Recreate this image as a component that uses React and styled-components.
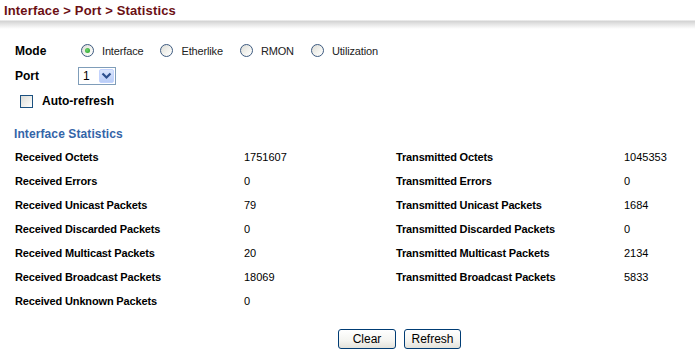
import React, { useState } from 'react';
import styled, { createGlobalStyle } from 'styled-components';

const GlobalStyle = createGlobalStyle`
  body {
    margin: 0;
    background: #ffffff;
    font-family: "Liberation Sans", Arial, sans-serif;
  }
`;

const stats = [
  ['Received Octets', '1751607', 'Transmitted Octets', '1045353'],
  ['Received Errors', '0', 'Transmitted Errors', '0'],
  ['Received Unicast Packets', '79', 'Transmitted Unicast Packets', '1684'],
  ['Received Discarded Packets', '0', 'Transmitted Discarded Packets', '0'],
  ['Received Multicast Packets', '20', 'Transmitted Multicast Packets', '2134'],
  ['Received Broadcast Packets', '18069', 'Transmitted Broadcast Packets', '5833'],
  ['Received Unknown Packets', '0', '', ''],
];

const modes = ['Interface', 'Etherlike', 'RMON', 'Utilization'];

const App = () => {
  const [mode, setMode] = useState('Interface');
  const [autoRefresh, setAutoRefresh] = useState(false);

  return (
    <Page>
      <GlobalStyle />
      <Header>
        <Title>Interface &gt; Port &gt; Statistics</Title>
      </Header>

      <Form>
        <FieldRow>
          <FieldLabel>Mode</FieldLabel>
          <RadioGroup>
            {modes.map((m) => (
              <RadioOption key={m} onClick={() => setMode(m)}>
                <Radio $checked={mode === m} />
                <span>{m}</span>
              </RadioOption>
            ))}
          </RadioGroup>
        </FieldRow>

        <FieldRow $top={6}>
          <FieldLabel>Port</FieldLabel>
          <SelectBox>
            <SelectValue>1</SelectValue>
            <SelectArrow>
              <svg width="11" height="8" viewBox="0 0 11 8">
                <path d="M1.5 1.5 L5.5 5.5 L9.5 1.5" fill="none" stroke="#2c4f8c" strokeWidth="2.2" />
              </svg>
            </SelectArrow>
          </SelectBox>
        </FieldRow>

        <CheckRow onClick={() => setAutoRefresh(!autoRefresh)}>
          <CheckBox $checked={autoRefresh} />
          <CheckLabel>Auto-refresh</CheckLabel>
        </CheckRow>
      </Form>

      <SectionTitle>Interface Statistics</SectionTitle>

      <StatsGrid>
        {stats.map((row, i) => (
          <React.Fragment key={i}>
            <StatLabel>{row[0]}</StatLabel>
            <StatValue>{row[1]}</StatValue>
            <StatLabel>{row[2]}</StatLabel>
            <StatValue>{row[3]}</StatValue>
          </React.Fragment>
        ))}
      </StatsGrid>

      <ButtonBar>
        <Button $width={58}>Clear</Button>
        <Button $width={57}>Refresh</Button>
      </ButtonBar>
    </Page>
  );
};

const Page = styled.div`
  width: 695px;
  height: 361px;
  overflow: hidden;
  font-size: 11px;
  color: #000;
`;

const Header = styled.div`
  height: 30px;
  padding: 3px 0 0 4px;
  box-sizing: border-box;
  background: linear-gradient(
    to bottom,
    #ffffff 0px,
    #ffffff 20px,
    #d2d2d2 21px,
    #e4e4e4 24px,
    #ffffff 29px
  );
`;

const Title = styled.div`
  font-size: 13px;
  font-weight: bold;
  color: #6b0f14;
  letter-spacing: 0.15px;
`;

const Form = styled.div`
  padding: 11px 0 0 15px;
`;

const FieldRow = styled.div`
  display: flex;
  align-items: center;
  height: 19px;
  margin-top: ${(p) => p.$top || 0}px;
`;

const FieldLabel = styled.div`
  width: 63px;
  font-weight: bold;
  font-size: 12px;
`;

const RadioGroup = styled.div`
  display: flex;
  align-items: center;
  gap: 17px;
  padding-left: 3px;
`;

const RadioOption = styled.label`
  display: flex;
  align-items: center;
  gap: 8px;
  cursor: pointer;
  font-size: 11px;
  letter-spacing: -0.15px;
  color: #222;
`;

const Radio = styled.span`
  position: relative;
  width: 11px;
  height: 11px;
  border-radius: 50%;
  border: 1px solid #3d5a80;
  background: linear-gradient(135deg, #dcdcd6 0%, #f4f4f0 60%, #ffffff 100%);

  &::after {
    content: '';
    display: ${(p) => (p.$checked ? 'block' : 'none')};
    position: absolute;
    left: 3px;
    top: 3px;
    width: 5px;
    height: 5px;
    border-radius: 50%;
    background: radial-gradient(circle at 40% 40%, #6fd46f, #1f9c1f);
  }
`;

const SelectBox = styled.div`
  display: flex;
  align-items: center;
  width: 38px;
  height: 18px;
  border: 1px solid #7f9db9;
  box-sizing: border-box;
  background: #fff;
`;

const SelectValue = styled.div`
  flex: 1;
  padding-left: 4px;
  font-size: 12px;
  color: #000;
`;

const SelectArrow = styled.div`
  width: 15px;
  height: 14px;
  margin-right: 1px;
  border-radius: 2px;
  background: linear-gradient(to bottom, #dbe6fc, #b9cdf7);
  border: 1px solid #c3d3fd;
  box-sizing: border-box;
  display: flex;
  align-items: center;
  justify-content: center;
`;

const CheckRow = styled.label`
  display: flex;
  align-items: center;
  gap: 9px;
  margin: 9px 0 0 5px;
  cursor: pointer;
`;

const CheckBox = styled.span`
  width: 13px;
  height: 13px;
  box-sizing: border-box;
  border: 1px solid #1c5180;
  background: ${(p) =>
    p.$checked ? '#fff' : 'linear-gradient(135deg, #dcdcd7 0%, #f5f5f2 70%, #fff 100%)'};
`;

const CheckLabel = styled.span`
  font-size: 12px;
  font-weight: bold;
`;

const SectionTitle = styled.div`
  margin: 19px 0 0 14px;
  font-size: 12px;
  font-weight: bold;
  color: #3465a8;
  letter-spacing: 0.1px;
`;

const StatsGrid = styled.div`
  display: grid;
  grid-template-columns: 229px 152px 228px 1fr;
  grid-auto-rows: 24px;
  padding: 4px 0 0 15px;
`;

const StatLabel = styled.div`
  font-weight: bold;
  font-size: 11px;
  line-height: 24px;
  letter-spacing: -0.15px;
`;

const StatValue = styled.div`
  font-size: 11px;
  line-height: 24px;
`;

const ButtonBar = styled.div`
  display: flex;
  justify-content: center;
  gap: 8px;
  margin-top: 16px;
  padding-left: 104px;
`;

const Button = styled.button`
  width: ${(p) => p.$width}px;
  height: 20px;
  padding: 0;
  font-family: "Liberation Sans", Arial, sans-serif;
  font-size: 12px;
  color: #000;
  border: 1px solid #003c74;
  border-radius: 3px;
  background: linear-gradient(to bottom, #ffffff 0%, #f4f4f0 60%, #e3e2da 100%);
  cursor: pointer;
`;

export default App;
